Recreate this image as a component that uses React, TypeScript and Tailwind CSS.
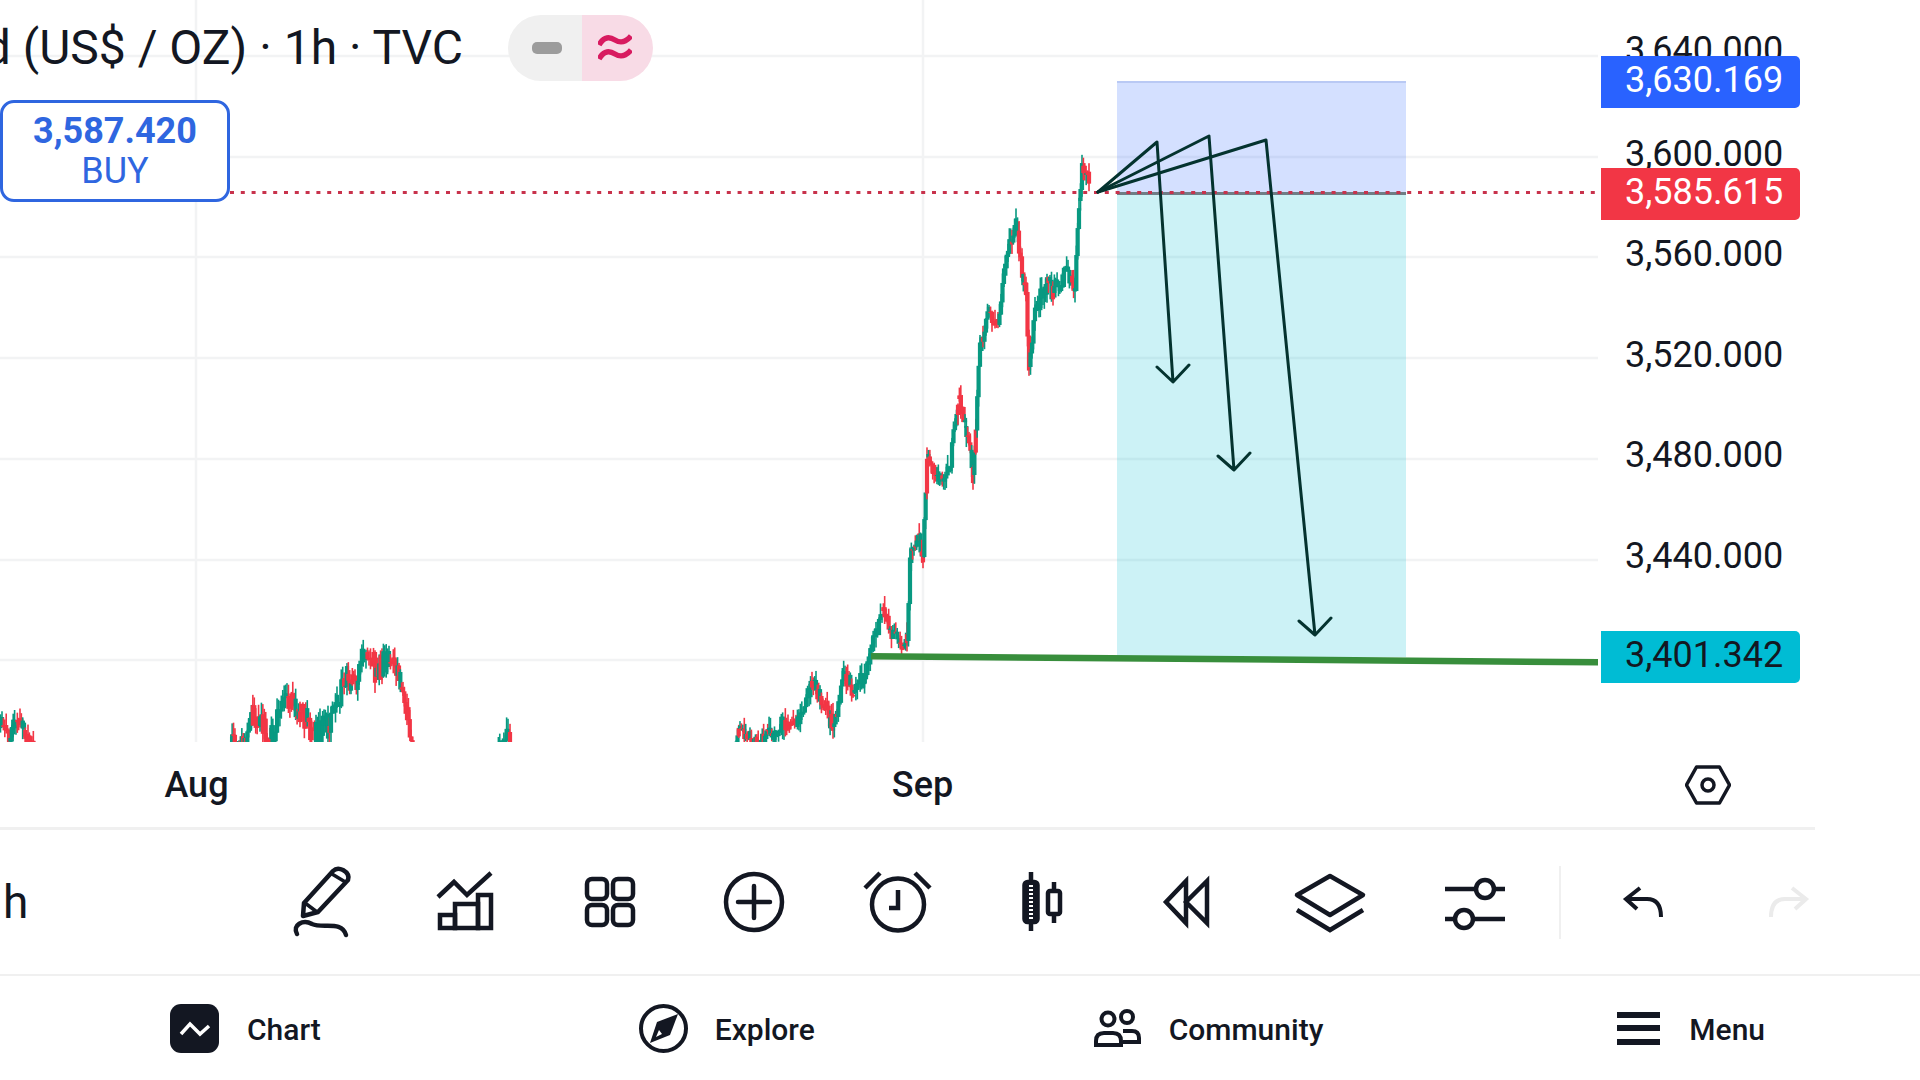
const GRID_Y = [56, 157, 257, 358, 459, 560, 660]

// close price path of the chart, points taken from the picture
const SEGMENTS: { noise: number; points: number[][] }[] = [
  { noise: 18, points: [[-4, 735], [2, 726], [9, 738], [16, 720], [24, 730], [28, 738], [36, 748]] },
  { noise: 28, points: [[228, 748], [246, 748], [250, 712], [260, 726], [270, 738], [287, 696], [300, 710], [316, 734], [328, 726], [337, 702], [347, 674], [355, 680], [366, 652], [375, 668], [389, 662], [399, 672], [407, 710], [414, 750]] },
  { noise: 12, points: [[497, 748], [508, 732], [510, 748]] },
  { noise: 18, points: [[735, 748], [740, 728], [750, 738], [765, 738], [784, 720], [796, 726], [812, 684], [820, 696], [833, 726], [845, 674], [853, 690], [866, 674], [876, 632], [882, 610], [890, 630], [903, 645], [907, 640], [910, 562], [918, 534], [923, 556], [927, 454], [937, 476], [949, 470], [958, 398], [965, 426], [973, 474], [980, 350], [989, 312], [998, 324], [1004, 264], [1016, 222], [1022, 274], [1026, 292], [1029, 366], [1035, 310], [1047, 282], [1053, 292], [1068, 270], [1075, 290], [1079, 200], [1082, 172], [1089, 180]] },
]

type Bar = { x: number; top: number; bottom: number; wickTop: number; wickBottom: number; up: boolean }

function buildBars() {
  let seed = 1337
  const rand = () => {
    seed = (seed * 16807) % 2147483647
    return seed / 2147483647
  }
  const bars: Bar[] = []
  for (const { noise, points } of SEGMENTS) {
    for (let i = 0; i < points.length - 1; i++) {
      const [x0, y0] = points[i]
      const [x1, y1] = points[i + 1]
      const steps = Math.max(1, Math.round((x1 - x0) / 1.4))
      let prev = y0
      for (let s = 1; s <= steps; s++) {
        const y = y0 + ((y1 - y0) * s) / steps + (rand() - 0.5) * noise
        const up = y1 < y0 ? rand() > 0.1 : y1 > y0 ? rand() > 0.7 : y < prev
        bars.push({
          x: x0 + ((x1 - x0) * s) / steps,
          top: Math.min(y, prev),
          bottom: Math.max(y, prev) + 1,
          wickTop: Math.min(y, prev) - rand() * 12,
          wickBottom: Math.max(y, prev) + rand() * 12,
          up,
        })
        prev = y
      }
    }
  }
  return bars
}

const BARS = buildBars()

function ChartCanvas() {
  return (
    <svg className="absolute left-0 top-0" width={1920} height={742}>
      {GRID_Y.map((y) => (
        <line key={y} x1={0} x2={1598} y1={y} y2={y} stroke="#f2f3f4" strokeWidth={2.5} />
      ))}
      <line x1={196} x2={196} y1={0} y2={742} stroke="#f2f3f4" strokeWidth={2.5} />
      <line x1={923} x2={923} y1={0} y2={742} stroke="#f2f3f4" strokeWidth={2.5} />

      {BARS.map((b, i) => (
        <g key={i} fill={b.up ? '#089981' : '#f23645'}>
          <rect x={b.x - 0.8} y={b.wickTop} width={1.6} height={b.wickBottom - b.wickTop} />
          <rect x={b.x - 2.1} y={b.top} width={4.2} height={b.bottom - b.top} />
        </g>
      ))}

      {/* short position tool */}
      <rect x={1117} y={81} width={289} height={112} fill="#2962ff" fillOpacity={0.2} />
      <rect x={1117} y={81} width={289} height={2} fill="#b9c9f4" />
      <rect x={1117} y={193} width={289} height={464} fill="#00bcd4" fillOpacity={0.2} />
      <line x1={1117} x2={1406} y1={193.5} y2={193.5} stroke="#6f7d86" strokeWidth={3} />

      <line x1={230} x2={1600} y1={192.5} y2={192.5} stroke="#c8324c" strokeWidth={3} strokeDasharray="4 6.8" />

      {/* hand drawn arrows */}
      <g fill="none" stroke="#04332f" strokeWidth={3} strokeLinejoin="round" strokeLinecap="round">
        <path d="M1098 192 L1157 142 L1173 382 M1157 367 L1173 382 L1189 365" />
        <path d="M1098 192 L1209 136 L1234 470 M1218 456 L1234 470 L1250 453" />
        <path d="M1098 192 L1266 140 L1315 635 M1299 621 L1315 635 L1331 618" />
      </g>

      <path d="M871 653 L1598 659 L1598 665.5 L871 659.5 Z" fill="#388e3c" />
    </svg>
  )
}

function AxisLabel({ className, children }: { className: string; children: string }) {
  return <div className={`absolute left-[1625px] text-[36px] leading-[42px] text-[#131722] ${className}`}>{children}</div>
}

function PriceTag({ className, children }: { className: string; children: string }) {
  return (
    <div className={`absolute left-[1601px] flex h-[52px] w-[199px] items-center rounded-r-[5px] pb-[4px] pl-[24px] text-[36px] leading-none ${className}`}>
      {children}
    </div>
  )
}

function Chart() {
  return (
    <div className="relative h-[742px] overflow-hidden">
      <ChartCanvas />

      <div className="relative flex pt-[15px]">
        <div className="flex h-[66px] w-[463px] items-center justify-end overflow-hidden">
          <span className="whitespace-nowrap text-[48px] leading-none text-[#131722]">Gold (US$ / OZ) · 1h · TVC</span>
        </div>
        <div className="ml-[45px] flex h-[66px] w-[145px] overflow-hidden rounded-full">
          <div className="flex w-[74px] items-center justify-end bg-[#f0f0f0] pr-[20px]">
            <div className="h-[12px] w-[30px] rounded-[5px] bg-[#9c9c9c]" />
          </div>
          <div className="flex flex-1 items-center justify-center bg-[#f8dbe6] pr-[6px]">
            <svg width="34" height="28" viewBox="0 0 34 28" fill="none" stroke="#d81b60" strokeWidth="5.5">
              <path d="M1 11 C6 2 12 3 17 6 C22 9 27 9 33 2" />
              <path d="M1 25 C6 16 12 17 17 20 C22 23 27 23 33 16" />
            </svg>
          </div>
        </div>
      </div>

      <div className="relative mt-[19px] flex h-[102px] w-[230px] flex-col items-center justify-center rounded-[14px] border-[3px] border-[#2f66e0] bg-white pb-[2px] text-[#2f66e0]">
        <span className="text-[36px] font-bold leading-[42px]">3,587.420</span>
        <span className="text-[36px] leading-[38px]">BUY</span>
      </div>

      <AxisLabel className="top-[29px]">3,640.000</AxisLabel>
      <AxisLabel className="top-[133px]">3,600.000</AxisLabel>
      <AxisLabel className="top-[233px]">3,560.000</AxisLabel>
      <AxisLabel className="top-[334px]">3,520.000</AxisLabel>
      <AxisLabel className="top-[434px]">3,480.000</AxisLabel>
      <AxisLabel className="top-[535px]">3,440.000</AxisLabel>

      <PriceTag className="top-[56px] bg-[#2962ff] text-white">3,630.169</PriceTag>
      <PriceTag className="top-[168px] bg-[#f23645] text-white">3,585.615</PriceTag>
      <PriceTag className="top-[631px] bg-[#00bcd4] text-[#131722]">3,401.342</PriceTag>
    </div>
  )
}

function TimeAxis() {
  return (
    <div className="flex h-[88px] w-[1815px] items-center border-b-[3px] border-[#f0f0f0] text-[#131722]">
      <span className="ml-[163px] w-[67px] text-center text-[36px] font-medium">Aug</span>
      <span className="ml-[659px] w-[67px] text-center text-[36px] font-medium">Sep</span>
      <svg className="ml-[729px]" width="46" height="40" viewBox="0 0 46 40" fill="none" stroke="#131722" strokeWidth="3.5">
        <path d="M1.5 20 L11.5 2 H34.5 L44.5 20 L34.5 38 H11.5 Z" strokeLinejoin="round" />
        <circle cx="23" cy="20" r="6" />
      </svg>
    </div>
  )
}

function ToolIcon({ children, stroke = '#131722' }: { children: React.ReactNode; stroke?: string }) {
  return (
    <div className="flex w-[144px] justify-center">
      <svg width="90" height="90" viewBox="0 0 90 90" fill="none" stroke={stroke} strokeWidth="4.5">
        {children}
      </svg>
    </div>
  )
}

function Toolbar() {
  return (
    <div className="flex h-[146px] items-center border-b-[2px] border-[#f0f0f0]">
      <span className="w-[250px] pl-[3px] text-[46px] leading-none text-[#131722]">h</span>

      <ToolIcon>
        <path d="M27 46 L56 14 Q60 10 66 13 Q73 17 71 23 L41 55 L26 59 Z" strokeLinejoin="round" />
        <path d="M55 17 L70 26 M28 46 L40 55" strokeWidth="3.5" />
        <path d="M20 77 C15 68 26 62 35 67 C46 72 65 63 69 78" strokeLinecap="round" />
      </ToolIcon>
      <ToolIcon>
        <path d="M17 40 L33 25 L46 38 L70 16" />
        <rect x="19" y="58" width="15" height="13" />
        <rect x="34" y="47" width="23" height="24" />
        <rect x="57" y="38" width="13" height="33" />
      </ToolIcon>
      <ToolIcon>
        <rect x="22" y="22" width="20" height="20" rx="5" />
        <rect x="48" y="22" width="20" height="20" rx="5" />
        <rect x="22" y="48" width="20" height="20" rx="5" />
        <rect x="48" y="48" width="20" height="20" rx="5" />
      </ToolIcon>
      <ToolIcon>
        <circle cx="45" cy="45" r="28" />
        <path d="M29 45 H61 M45 29 V61" strokeLinecap="round" />
      </ToolIcon>
      <ToolIcon>
        <circle cx="45" cy="47.5" r="26" />
        <path d="M45 33 V51 H36" />
        <path d="M12 31 L27 16 M62 16 L77 31" />
      </ToolIcon>
      <ToolIcon>
        <path d="M34 15 V74 M57 25 V66" />
        <rect x="27.5" y="25" width="13" height="40" rx="3" fill="#131722" />
        <path d="M34 28 V62" stroke="#ffffff" strokeWidth="4" strokeDasharray="2 2" />
        <rect x="51" y="34" width="12" height="23" rx="2" fill="#ffffff" />
      </ToolIcon>
      <ToolIcon>
        <path d="M45 24 L25 45 L45 66 Z M66 24 L45 45 L66 66 Z" />
      </ToolIcon>
      <ToolIcon>
        <path d="M45 19 L78 38 L45 58 L12 38 Z" strokeLinejoin="round" />
        <path d="M12 53 L45 73 L78 53" />
      </ToolIcon>
      <ToolIcon>
        <path d="M16 32 H47 M65 32 H76 M16 62 H26 M44 62 H76" />
        <circle cx="56" cy="32" r="9" />
        <circle cx="35" cy="62" r="9" />
      </ToolIcon>

      <div className="ml-[13px] mr-[11px] h-[73px] w-[2px] bg-[#f0f0f0]" />

      <ToolIcon>
        <path d="M41 31 L27 42 L38 52 M27 42 H48 Q62 42 62 60" strokeWidth="4" />
      </ToolIcon>
      <ToolIcon stroke="#ebebeb">
        <path d="M49 31 L63 42 L52 52 M63 42 H42 Q28 42 28 60" strokeWidth="4" />
      </ToolIcon>
    </div>
  )
}

function BottomNav() {
  return (
    <div className="flex h-[104px] items-center pl-[170px] text-[30px] font-medium text-[#131722]">
      <div className="flex items-center gap-[28px]">
        <svg width="49" height="49" viewBox="0 0 49 49">
          <rect width="49" height="49" rx="11" fill="#131722" />
          <path d="M11 30 L20 20 L30 30 L39 22" fill="none" stroke="#ffffff" strokeWidth="3.5" />
        </svg>
        <span className="mt-[3px]">Chart</span>
      </div>
      <div className="ml-[318px] flex items-center gap-[27px]">
        <svg width="49" height="49" viewBox="0 0 49 49">
          <circle cx="24.5" cy="24.5" r="22.5" fill="none" stroke="#131722" strokeWidth="4" />
          <path d="M39 10 L31 31 L11 39 L18 18 Z" fill="#131722" />
          <path d="M17 33 L20 26 L23 30 Z" fill="#ffffff" />
        </svg>
        <span className="mt-[3px]">Explore</span>
      </div>
      <div className="ml-[278px] flex items-center gap-[28px]">
        <svg width="48" height="38" viewBox="0 0 48 38" fill="none" stroke="#131722" strokeWidth="4">
          <circle cx="15" cy="10" r="6.5" />
          <circle cx="34" cy="8" r="6" />
          <path d="M30 22 H39 Q46 22 46 29 V33 H30" />
          <path d="M3 36 V32 Q3 24 11 24 H20 Q28 24 28 32 V36 Z" />
        </svg>
        <span className="mt-[3px]">Community</span>
      </div>
      <div className="ml-[294px] flex items-center gap-[29px]">
        <div className="flex h-[33px] w-[43px] flex-col justify-between">
          <div className="h-[6px] bg-[#131722]" />
          <div className="h-[6px] bg-[#131722]" />
          <div className="h-[6px] bg-[#131722]" />
        </div>
        <span className="mt-[3px]">Menu</span>
      </div>
    </div>
  )
}

export default function App() {
  return (
    <div className="h-[1080px] w-[1920px] overflow-hidden bg-white font-['Roboto',sans-serif]">
      <Chart />
      <TimeAxis />
      <Toolbar />
      <BottomNav />
    </div>
  )
}
